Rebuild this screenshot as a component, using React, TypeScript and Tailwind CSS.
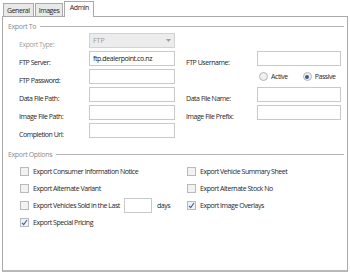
import React from 'react';

const font = { fontFamily: '"Open Sans", "Liberation Sans", sans-serif' };

function Legend({ title }: { title: string }) {
  return (
    <div className="flex items-center h-[10px] pl-[5px] pr-[3px]">
      <span className="text-[7px] text-[#8a8a8a] leading-none tracking-[-0.35px] whitespace-nowrap">{title}</span>
      <div className="flex-1 ml-[4px] h-px bg-[#b4b4b4]" />
    </div>
  );
}

function Label({ children, muted }: { children: React.ReactNode; muted?: boolean }) {
  return (
    <span
      className={`text-[7px] leading-none tracking-[-0.45px] whitespace-nowrap ${muted ? 'text-[#a0a0a0]' : 'text-[#262626]'}`}
    >
      {children}
    </span>
  );
}

function Input({ value, w }: { value?: string; w: string }) {
  return (
    <div className={`${w} h-[15px] border border-[#c9c9c9] bg-white flex items-center px-[3px]`}>
      <span className="text-[7px] leading-none text-[#222] tracking-[-0.4px] whitespace-nowrap">{value}</span>
    </div>
  );
}

function Check({ label, checked }: { label: string; checked?: boolean }) {
  return (
    <div className="flex items-center gap-[4px] h-[17px]">
      <div className="w-[9px] h-[9px] border border-[#b9b9b9] bg-[#f2f2f2] flex items-center justify-center">
        {checked && (
          <svg width="7" height="7" viewBox="0 0 7 7">
            <path d="M1 3.8 L2.7 5.6 L6 1" fill="none" stroke="#3a5fa8" strokeWidth="1.1" />
          </svg>
        )}
      </div>
      <Label>{label}</Label>
    </div>
  );
}

function Radio({ label, on }: { label: string; on?: boolean }) {
  return (
    <div className="flex items-center gap-[3px]">
      <div className="w-[9px] h-[9px] rounded-full border border-[#b5b5b5] bg-[#f0f0f0] flex items-center justify-center">
        {on && <div className="w-[4px] h-[4px] rounded-full bg-[#3b5a92]" />}
      </div>
      <Label>{label}</Label>
    </div>
  );
}

export default function App() {
  return (
    <div className="w-[350px] h-[273px] bg-white" style={font}>
      {/* tabs */}
      <div className="flex items-end h-[16px] pl-[3px]">
        <div className="h-[13px] px-[3px] border border-b-0 border-[#a9a9a9] bg-[#e9e9e9] flex items-center">
          <Label>General</Label>
        </div>
        <div className="h-[13px] px-[3px] ml-[1px] border border-b-0 border-[#a9a9a9] bg-[#e9e9e9] flex items-center">
          <Label>Images</Label>
        </div>
        <div className="h-[16px] w-[30px] ml-[1px] border border-b-0 border-[#a9a9a9] bg-white flex items-start justify-center pt-[2px] relative z-10 -mb-px">
          <Label>Admin</Label>
        </div>
      </div>

      {/* panel */}
      <div className="mx-[2px] w-[346px] h-[256px] border border-[#a9a9a9] border-b-2 border-b-[#b8b8b8] pt-[4px]">
        <Legend title="Export To" />

        <div className="mt-[2px] pl-[16px] flex flex-col gap-[3px]">
          <div className="flex items-center h-[15px]">
            <div className="w-[70px]"><Label muted>Export Type:</Label></div>
            <div className="w-[86px] h-[15px] border border-[#d2d2d2] bg-[#ececec] flex items-center justify-between px-[3px]">
              <span className="text-[7px] leading-none text-[#9a9a9a]">FTP</span>
              <svg width="5" height="3" viewBox="0 0 5 3">
                <path d="M0 0 L5 0 L2.5 3 Z" fill="#a0a0a0" />
              </svg>
            </div>
          </div>

          <div className="flex items-center h-[15px]">
            <div className="w-[70px]"><Label>FTP Server:</Label></div>
            <Input w="w-[86px]" value="ftp.dealerpoint.co.nz" />
            <div className="w-[11px]" />
            <div className="w-[71px]"><Label>FTP Username:</Label></div>
            <Input w="w-[84px]" />
          </div>

          <div className="flex items-center h-[15px]">
            <div className="w-[70px]"><Label>FTP Password:</Label></div>
            <Input w="w-[86px]" />
            <div className="w-[84px]" />
            <div className="flex items-center gap-[15px]">
              <Radio label="Active" />
              <Radio label="Passive" on />
            </div>
          </div>

          <div className="flex items-center h-[15px]">
            <div className="w-[70px]"><Label>Data File Path:</Label></div>
            <Input w="w-[86px]" />
            <div className="w-[11px]" />
            <div className="w-[71px]"><Label>Data File Name:</Label></div>
            <Input w="w-[84px]" />
          </div>

          <div className="flex items-center h-[15px]">
            <div className="w-[70px]"><Label>Image File Path:</Label></div>
            <Input w="w-[86px]" />
            <div className="w-[11px]" />
            <div className="w-[71px]"><Label>Image File Prefix:</Label></div>
            <Input w="w-[84px]" />
          </div>

          <div className="flex items-center h-[15px]">
            <div className="w-[70px]"><Label>Completion Url:</Label></div>
            <Input w="w-[86px]" />
          </div>
        </div>

        <div className="mt-[11px]">
          <Legend title="Export Options" />
        </div>

        <div className="mt-[4px] pl-[17px] grid grid-cols-[167px_1fr]">
          <Check label="Export Consumer Information Notice" />
          <Check label="Export Vehicle Summary Sheet" />
          <Check label="Export Alternate Variant" />
          <Check label="Export Alternate Stock No" />
          <div className="flex items-center">
            <Check label="Export Vehicles Sold in the Last" />
            <div className="ml-[4px] w-[28px] h-[15px] border border-[#c9c9c9]" />
            <span className="ml-[5px] flex"><Label>days</Label></span>
          </div>
          <Check label="Export Image Overlays" checked />
          <Check label="Export Special Pricing" checked />
        </div>
      </div>
    </div>
  );
}
